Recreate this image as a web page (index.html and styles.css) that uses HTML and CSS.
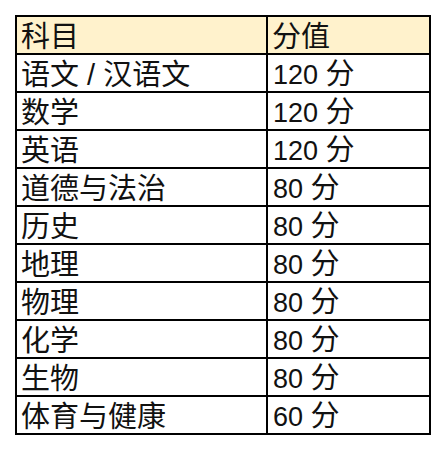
FILE: index.html
```html
<!DOCTYPE html>
<html lang="zh">
<head>
<meta charset="utf-8">
<link rel="stylesheet" href="styles.css">
</head>
<body>
<div class="page">
<table class="score">
<colgroup><col class="c1"><col class="c2"></colgroup>
<thead>
<tr class="head"><th class="name">科目</th><th class="name">分值</th></tr>
</thead>
<tbody>
<tr><td class="name">语文 / 汉语文</td><td class="num">120 <span class="unit">分</span></td></tr>
<tr><td class="name">数学</td><td class="num">120 <span class="unit">分</span></td></tr>
<tr><td class="name">英语</td><td class="num">120 <span class="unit">分</span></td></tr>
<tr><td class="name">道德与法治</td><td class="num">80 <span class="unit">分</span></td></tr>
<tr><td class="name">历史</td><td class="num">80 <span class="unit">分</span></td></tr>
<tr><td class="name">地理</td><td class="num">80 <span class="unit">分</span></td></tr>
<tr><td class="name">物理</td><td class="num">80 <span class="unit">分</span></td></tr>
<tr><td class="name">化学</td><td class="num">80 <span class="unit">分</span></td></tr>
<tr><td class="name">生物</td><td class="num">80 <span class="unit">分</span></td></tr>
<tr><td class="name">体育与健康</td><td class="num">60 <span class="unit">分</span></td></tr>
</tbody>
</table>
</div>
</body>
</html>
```

FILE: styles.css
```css
html, body {
  margin: 0;
  padding: 0;
  background: #ffffff;
}
.page {
  padding: 15px 0 0 15px;
}
.score {
  border-collapse: separate;
  border-spacing: 0;
  table-layout: fixed;
  width: 416px;
  border-left: 2px solid #000;
  border-top: 2px solid #000;
  font-family: "Liberation Sans", "Noto Sans CJK SC", sans-serif;
  font-size: 27px;
  color: #111;
}
.c1 { width: 251px; }
.c2 { width: 163px; }
.score th,
.score td {
  box-sizing: border-box;
  height: 38px;
  padding: 5px 5px 0 5px;
  line-height: 31px;
  border-right: 2px solid #000;
  border-bottom: 2px solid #000;
  text-align: left;
  font-weight: 400;
  white-space: nowrap;
  vertical-align: top;
  overflow: hidden;
}
.score .name {
  font-size: 29px;
  padding-left: 4px;
}
.unit {
  font-size: 29px;
  line-height: 1;
}
.head th {
  background: #fff2cc;
}
```
